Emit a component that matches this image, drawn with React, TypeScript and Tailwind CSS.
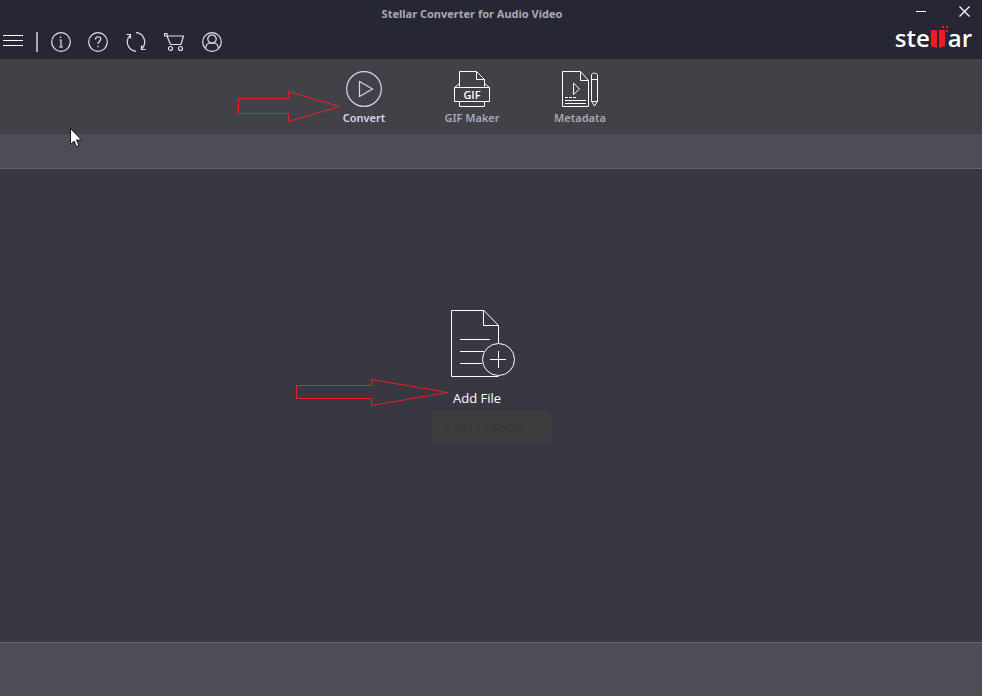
import React from 'react'

const HeaderButton = ({ label, children }: { label: string; children: React.ReactNode }) => {
    return (
        <button aria-label={label} className="text-[#e2e1ec]">
            <svg width="22" height="22" viewBox="0 0 22 22" fill="none" stroke="currentColor" strokeWidth="1.2">
                {children}
            </svg>
        </button>
    )
}

const ToolButton = ({ label, active, children }: { label: string; active?: boolean; children: React.ReactNode }) => {
    return (
        <button className={`relative flex w-[108px] flex-col items-center gap-[3px] text-[11px] leading-4 font-semibold ${active ? 'text-[#d8d6ee]' : 'text-[#a9a9b5]'}`}>
            {children}
            <span>{label}</span>
        </button>
    )
}

const Header = () => {
    return (
        <header className="bg-[#272634]">
            <div className="grid h-[26px] grid-cols-3 items-center">
                <h1 className="col-start-2 pt-[2px] pr-[38px] text-center text-[11px] leading-4 font-bold whitespace-nowrap text-[#a9a9b5]">
                    Stellar Converter for Audio Video
                </h1>
                <div className="flex h-[22px] justify-end gap-8 self-start pr-3 text-white">
                    <button aria-label="Minimize">
                        <svg width="11" height="11" stroke="currentColor">
                            <path d="M0 5.5h10" />
                        </svg>
                    </button>
                    <button aria-label="Close">
                        <svg width="11" height="11" stroke="currentColor" strokeWidth="1.3">
                            <path d="M0.5 0.5l10 10M10.5 0.5l-10 10" />
                        </svg>
                    </button>
                </div>
            </div>
            <div className="flex h-[33px] items-start justify-between pr-[10px] pl-[3px]">
                <nav className="flex h-8 items-center gap-4">
                    <button aria-label="Menu" className="text-white">
                        <svg width="20" height="14" stroke="currentColor">
                            <path d="M0 .5h20M0 5.5h20M0 10.5h20" />
                        </svg>
                    </button>
                    <span className="-mr-1 -ml-[3px] h-5 w-[2px] bg-[#a9a9b5]" />
                    <HeaderButton label="Information">
                        <circle cx="11" cy="11" r="9.3" />
                        <path d="M9.5 9h1.5v7M9 16h4M10.5 5.5v1.5" />
                    </HeaderButton>
                    <HeaderButton label="Help">
                        <circle cx="10" cy="11" r="9.3" />
                        <path d="M7.5 8.5c0-3.6 5.2-3.6 5.2-.4 0 2.4-2.7 2.4-2.7 5M10 14.7v1.5" />
                    </HeaderButton>
                    <HeaderButton label="Update">
                        <path d="M10 20.3A9.3 9.3 0 0 1 4 4.5M.5 3.5h4v4M10 1.7a9.3 9.3 0 0 1 6 15.8M19.5 18.5h-4v-4" />
                    </HeaderButton>
                    <HeaderButton label="Buy">
                        <path d="M.5 2.5h2.500v2.500H.5zM3 5h16.500l-2.500 8.500H6.500L3 5" />
                        <circle cx="6.5" cy="17.5" r="2" />
                        <circle cx="16.500" cy="17.5" r="2" />
                    </HeaderButton>
                    <HeaderButton label="Account">
                        <circle cx="10" cy="11" r="9.3" />
                        <circle cx="10" cy="8" r="4.2" />
                        <path d="M3.5 17.5c.5-3.5 2.5-5.5 5-5.5h3c2.5 0 4.5 2 5 5.5" />
                    </HeaderButton>
                </nav>
                <a href="#" aria-label="stellar" className="flex h-6 items-end font-['Open_Sans',sans-serif] text-2xl leading-6 font-semibold text-white">
                    <span>ste</span>
                    <svg width="18" height="24" viewBox="0 0 18 24" fill="#ee1c25">
                        <path d="M1 4h6v18l-6-2zM9 4h6v16l-6 2zM12 0h2v2h-2zM16 0h2v2h-2zM16 4h2v2h-2z" />
                    </svg>
                    <span>ar</span>
                </a>
            </div>
        </header>
    )
}

const Toolbar = () => {
    return (
        <div className="flex h-[75px] items-start justify-center bg-[#414147] pt-3 pr-[38px]">
            <ToolButton label="Convert" active>
                <svg width="36" height="36" viewBox="0 0 36 36" fill="none" stroke="currentColor" strokeWidth="1.2">
                    <circle cx="18" cy="18" r="17.3" />
                    <path d="M13.5 10.5v15l13-7.5z" />
                </svg>
                <svg className="absolute top-5 right-[78px]" width="102" height="32" fill="none" stroke="#ee1c25">
                    <path d="M.5 7.5h50v-7l51 15-51 15v-8h-50z" />
                </svg>
            </ToolButton>
            <ToolButton label="GIF Maker">
                <svg width="36" height="36" viewBox="0 0 36 36" fill="none" stroke="#fff">
                    <path d="M5.5 16V.5h17l8 8V16M22.5.5v8h8M5.5 12.5l-5 4M30.5 12.5l5 4M.5 16.5h35v14H.5zM5.5 30.5v5h25v-5" />
                    <text x="18" y="28" textAnchor="middle" fill="#fff" stroke="none" fontSize="11" fontWeight="600" fontFamily="Open Sans, sans-serif">GIF</text>
                </svg>
            </ToolButton>
            <ToolButton label="Metadata">
                <svg width="36" height="36" viewBox="0 0 36 36" fill="none" stroke="#fff">
                    <path d="M.5.5h18l8 9v26H.5zM18.5.5v9h8M11.5 12v11.5l6-5.5zM3 26.5h3M7 26.5h3M11 26.5h3M3 29.5h21M3 32.5h21" />
                    <path d="M29.5 30V4c0-2.5 6-2.5 6 0v26l-3 5zM29.5 8.5h6M29.5 30.5h6" />
                </svg>
            </ToolButton>
        </div>
    )
}

const Cursor = () => {
    return (
        <svg className="absolute top-[128px] left-[70px]" width="13" height="20" fill="#fff" stroke="#16152a">
            <path d="M.5.5v16l3.5-3.5 2.5 5.5 2.5-1-2.5-5.5h5z" />
        </svg>
    )
}

const App = () => {
    return (
        <div className="relative flex min-h-screen flex-col bg-[#393842] font-['Noto_Sans',sans-serif]">
            <Header />
            <Toolbar />
            <div className="h-[35px] border-b border-[#66666a] bg-[#4d4d55]" />
            <main className="flex flex-1 flex-col items-center justify-center pb-[58px]">
                <button className="relative flex w-20 flex-col items-start gap-[10px] font-['Open_Sans',sans-serif] text-[13px] leading-5 text-white">
                    <svg width="65" height="68" viewBox="0 0 65 68" fill="none" stroke="currentColor">
                        <path d="M47.5 34V15.5L33 .5H.5v66h47M32.5.5v15h15M9 29.5h30M9 41.5h24M9 53.5h22" />
                        <circle cx="47.5" cy="49.5" r="16" />
                        <path d="M39 49.5h16M47.5 41v17" />
                    </svg>
                    <span className="pl-[2px]">Add File</span>
                    <svg className="absolute top-[69px] right-[82px]" width="153" height="28" fill="none" stroke="#ee1c25">
                        <path d="M.5 6.5h75v-6l76 13-76 13v-7h-75z" />
                    </svg>
                </button>
                <div className="mt-[3px] h-[33px] w-[119px] bg-[#3d3c3f] pl-3 font-['Liberation_Sans',sans-serif] text-sm leading-8 text-[#39383d]">
                    1761718603
                </div>
            </main>
            <footer className="h-[54px] border-t border-[#66666a] bg-[#4d4d55]" />
            <Cursor />
        </div>
    )
}

export default App
